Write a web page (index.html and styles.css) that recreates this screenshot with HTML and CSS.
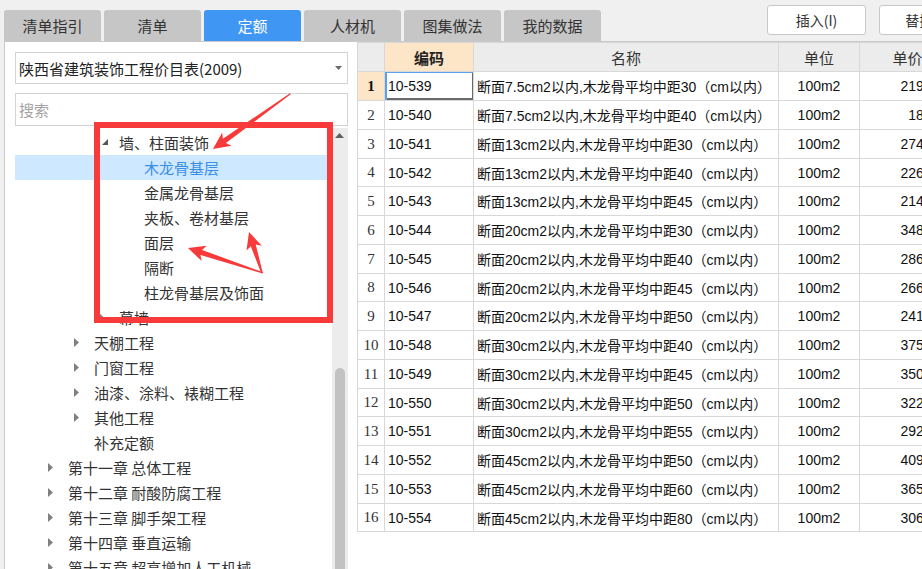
FILE: index.html
```html
<!DOCTYPE html>
<html lang="zh-CN">
<head>
<meta charset="utf-8">
<title>定额</title>
<link rel="stylesheet" href="styles.css">
</head>
<body>
<div class="topbar">
  <div class="tabs">
    <div class="tab">清单指引</div>
    <div class="tab">清单</div>
    <div class="tab active">定额</div>
    <div class="tab">人材机</div>
    <div class="tab">图集做法</div>
    <div class="tab">我的数据</div>
  </div>
  <div class="actions">
    <div class="btn">插入(I)</div>
    <div class="btn">替换(R)</div>
  </div>
</div>
<div class="main">
  <div class="left">
    <div class="select">
      <span>陕西省建筑装饰工程价目表(2009)</span>
      <svg class="dd" width="7" height="4" viewBox="0 0 7 4"><polygon points="0,0 7,0 3.5,4" fill="#6a6a6a"/></svg>
    </div>
    <div class="search">搜索</div>
    <div class="treewrap">
      <div class="tree">
        <div class="row l3"><span class="tw"><svg class="exp" width="6" height="6" viewBox="0 0 6 6"><polygon points="6,0 6,6 0,6" fill="#555"/></svg></span>墙、柱面装饰</div>
        <div class="row l4 sel"><span class="tw"></span>木龙骨基层</div>
        <div class="row l4"><span class="tw"></span>金属龙骨基层</div>
        <div class="row l4"><span class="tw"></span>夹板、卷材基层</div>
        <div class="row l4"><span class="tw"></span>面层</div>
        <div class="row l4"><span class="tw"></span>隔断</div>
        <div class="row l4"><span class="tw"></span>柱龙骨基层及饰面</div>
        <div class="row l3"><span class="tw"><svg width="5" height="9" viewBox="0 0 5 9"><polygon points="0,0 5,4.5 0,9" fill="#808080"/></svg></span>幕墙</div>
        <div class="row l2"><span class="tw"><svg width="5" height="9" viewBox="0 0 5 9"><polygon points="0,0 5,4.5 0,9" fill="#808080"/></svg></span>天棚工程</div>
        <div class="row l2"><span class="tw"><svg width="5" height="9" viewBox="0 0 5 9"><polygon points="0,0 5,4.5 0,9" fill="#808080"/></svg></span>门窗工程</div>
        <div class="row l2"><span class="tw"><svg width="5" height="9" viewBox="0 0 5 9"><polygon points="0,0 5,4.5 0,9" fill="#808080"/></svg></span>油漆、涂料、裱糊工程</div>
        <div class="row l2"><span class="tw"><svg width="5" height="9" viewBox="0 0 5 9"><polygon points="0,0 5,4.5 0,9" fill="#808080"/></svg></span>其他工程</div>
        <div class="row l2"><span class="tw"></span>补充定额</div>
        <div class="row l1"><span class="tw"><svg width="5" height="9" viewBox="0 0 5 9"><polygon points="0,0 5,4.5 0,9" fill="#808080"/></svg></span>第十一章 总体工程</div>
        <div class="row l1"><span class="tw"><svg width="5" height="9" viewBox="0 0 5 9"><polygon points="0,0 5,4.5 0,9" fill="#808080"/></svg></span>第十二章 耐酸防腐工程</div>
        <div class="row l1"><span class="tw"><svg width="5" height="9" viewBox="0 0 5 9"><polygon points="0,0 5,4.5 0,9" fill="#808080"/></svg></span>第十三章 脚手架工程</div>
        <div class="row l1"><span class="tw"><svg width="5" height="9" viewBox="0 0 5 9"><polygon points="0,0 5,4.5 0,9" fill="#808080"/></svg></span>第十四章 垂直运输</div>
        <div class="row l1"><span class="tw"><svg width="5" height="9" viewBox="0 0 5 9"><polygon points="0,0 5,4.5 0,9" fill="#808080"/></svg></span>第十五章 超高增加人工机械</div>
      </div>
      <div class="scroll">
        <svg class="up" width="9" height="5" viewBox="0 0 9 5"><polygon points="0,5 4.5,0 9,5" fill="#606060"/></svg>
        <div class="thumb"></div>
      </div>
    </div>
  </div>
  <div class="grid">
    <table>
      <colgroup>
        <col class="c-no"><col class="c-code"><col class="c-name"><col class="c-unit"><col class="c-price">
      </colgroup>
      <thead>
        <tr><th></th><th class="h-code">编码</th><th>名称</th><th>单位</th><th>单价</th></tr>
      </thead>
      <tbody>
        <tr><td class="no cur">1</td><td class="code focus">10-539</td><td class="name">断面7.5cm2以内,木龙骨平均中距30（cm以内）</td><td class="unit">100m2</td><td class="price">2193.64</td></tr>
        <tr><td class="no">2</td><td class="code">10-540</td><td class="name">断面7.5cm2以内,木龙骨平均中距40（cm以内）</td><td class="unit">100m2</td><td class="price">1864.7</td></tr>
        <tr><td class="no">3</td><td class="code">10-541</td><td class="name">断面13cm2以内,木龙骨平均中距30（cm以内）</td><td class="unit">100m2</td><td class="price">2745.18</td></tr>
        <tr><td class="no">4</td><td class="code">10-542</td><td class="name">断面13cm2以内,木龙骨平均中距40（cm以内）</td><td class="unit">100m2</td><td class="price">2269.35</td></tr>
        <tr><td class="no">5</td><td class="code">10-543</td><td class="name">断面13cm2以内,木龙骨平均中距45（cm以内）</td><td class="unit">100m2</td><td class="price">2142.86</td></tr>
        <tr><td class="no">6</td><td class="code">10-544</td><td class="name">断面20cm2以内,木龙骨平均中距30（cm以内）</td><td class="unit">100m2</td><td class="price">3481.27</td></tr>
        <tr><td class="no">7</td><td class="code">10-545</td><td class="name">断面20cm2以内,木龙骨平均中距40（cm以内）</td><td class="unit">100m2</td><td class="price">2866.04</td></tr>
        <tr><td class="no">8</td><td class="code">10-546</td><td class="name">断面20cm2以内,木龙骨平均中距45（cm以内）</td><td class="unit">100m2</td><td class="price">2660.93</td></tr>
        <tr><td class="no">9</td><td class="code">10-547</td><td class="name">断面20cm2以内,木龙骨平均中距50（cm以内）</td><td class="unit">100m2</td><td class="price">2417.52</td></tr>
        <tr><td class="no">10</td><td class="code">10-548</td><td class="name">断面30cm2以内,木龙骨平均中距40（cm以内）</td><td class="unit">100m2</td><td class="price">3752.41</td></tr>
        <tr><td class="no">11</td><td class="code">10-549</td><td class="name">断面30cm2以内,木龙骨平均中距45（cm以内）</td><td class="unit">100m2</td><td class="price">3508.66</td></tr>
        <tr><td class="no">12</td><td class="code">10-550</td><td class="name">断面30cm2以内,木龙骨平均中距50（cm以内）</td><td class="unit">100m2</td><td class="price">3224.15</td></tr>
        <tr><td class="no">13</td><td class="code">10-551</td><td class="name">断面30cm2以内,木龙骨平均中距55（cm以内）</td><td class="unit">100m2</td><td class="price">2923.08</td></tr>
        <tr><td class="no">14</td><td class="code">10-552</td><td class="name">断面45cm2以内,木龙骨平均中距50（cm以内）</td><td class="unit">100m2</td><td class="price">4093.72</td></tr>
        <tr><td class="no">15</td><td class="code">10-553</td><td class="name">断面45cm2以内,木龙骨平均中距60（cm以内）</td><td class="unit">100m2</td><td class="price">3657.29</td></tr>
        <tr><td class="no">16</td><td class="code">10-554</td><td class="name">断面45cm2以内,木龙骨平均中距80（cm以内）</td><td class="unit">100m2</td><td class="price">3068.45</td></tr>
      </tbody>
    </table>
  </div>
</div>
<svg class="annot" width="922" height="569" viewBox="0 0 922 569">
  <rect x="97" y="125" width="233" height="195" fill="none" stroke="#f83a3a" stroke-width="6"/>
  <g transform="translate(213,149) rotate(144.5)">
    <polygon points="0,0 -17,-8 -14,-2.6 -95,-0.6 -95,0.6 -14,2.6 -17,8" fill="#f83a3a"/>
  </g>
  <g transform="translate(188,248) rotate(-161.6)">
    <polygon points="0,0 -17,-8 -14,-2.6 -79,-0.6 -79,0.6 -14,2.6 -17,8" fill="#f83a3a"/>
  </g>
  <g transform="translate(249,232) rotate(-107.6)">
    <polygon points="0,0 -17,-8 -14,-2.6 -43,-0.8 -43,0.8 -14,2.6 -17,8" fill="#f83a3a"/>
  </g>
</svg>
</body>
</html>
```
FILE: styles.css
```css
html, body {
  margin: 0;
  padding: 0;
}
body {
  width: 922px;
  height: 569px;
  overflow: hidden;
  background: #f0f0f0;
  font-family: "Noto Sans CJK SC", "Liberation Sans", sans-serif;
  color: #333;
  position: relative;
}
.topbar {
  height: 41px;
  display: flex;
  align-items: flex-start;
  padding-left: 4px;
  box-sizing: border-box;
  overflow: hidden;
}
.tabs {
  display: flex;
  gap: 3px;
  margin-top: 10px;
  flex-shrink: 0;
}
.tab {
  width: 97px;
  height: 31px;
  background: #c6c6c6;
  border-radius: 3px 3px 0 0;
  font-size: 15px;
  color: #333;
  display: flex;
  align-items: center;
  justify-content: center;
}
.tab.active {
  background: #3f97f3;
  color: #fff;
}
.actions {
  display: flex;
  gap: 13px;
  margin-left: 166px;
  margin-top: 5px;
  flex-shrink: 0;
}
.btn {
  width: 99px;
  height: 30px;
  box-sizing: border-box;
  background: #fff;
  border: 1px solid #c8c8c8;
  border-radius: 3px;
  font-size: 14px;
  color: #333;
  display: flex;
  align-items: center;
  justify-content: center;
  flex-shrink: 0;
}
.main {
  display: flex;
  height: 528px;
}
.left {
  width: 353px;
  flex-shrink: 0;
  margin-left: 4px;
  box-sizing: border-box;
  background: #fff;
  border-left: 1px solid #c9c9c9;
  border-top: 1px solid #c9c9c9;
  padding: 10px 9px 0 10px;
  display: flex;
  flex-direction: column;
  overflow: hidden;
}
.select {
  height: 32px;
  box-sizing: border-box;
  border: 1px solid #d3d3d3;
  display: flex;
  align-items: center;
  padding-left: 3px;
  font-size: 15px;
  color: #222;
  flex-shrink: 0;
}
.select .dd {
  margin-left: auto;
  margin-right: 5px;
}
.search {
  margin-top: 9px;
  height: 33px;
  box-sizing: border-box;
  border: 1px solid #d3d3d3;
  padding-left: 3px;
  font-size: 15px;
  color: #a3a3a3;
  display: flex;
  align-items: center;
  flex-shrink: 0;
}
.treewrap {
  margin-top: 2px;
  display: flex;
  flex: 1;
  min-height: 0;
}
.tree {
  flex: 1;
  padding-top: 2px;
  overflow: hidden;
}
.row {
  height: 25px;
  display: flex;
  align-items: center;
  font-size: 15px;
  color: #333;
  white-space: nowrap;
}
.row.l1 { padding-left: 33px; }
.row.l2 { padding-left: 59px; }
.row.l3 { padding-left: 84px; }
.row.l4 { padding-left: 109px; }
.row.sel {
  background: #cde8ff;
  color: #3a8de4;
}
.tw {
  width: 20px;
  flex-shrink: 0;
  display: flex;
  align-items: center;
}
.tw .exp {
  margin-left: 3px;
  margin-top: -2px;
}
.scroll {
  width: 16px;
  background: #ececec;
  display: flex;
  flex-direction: column;
  flex-shrink: 0;
}
.scroll .up {
  margin: 5px 0 0 3px;
  flex-shrink: 0;
}
.thumb {
  margin: 230px 0 0 3px;
  width: 10px;
  flex: 1;
  background: #c2c2c2;
  border-radius: 5px 5px 0 0;
}
.grid {
  flex: 1;
  background: #fff;
  border-top: 1px solid #c9c9c9;
  overflow: hidden;
  min-width: 0;
}
table {
  border-collapse: collapse;
  table-layout: fixed;
  width: 598px;
  font-family: "Liberation Sans", "Noto Sans CJK SC", sans-serif;
  font-size: 14px;
  color: #111;
}
.c-no { width: 27px; }
.c-code { width: 89px; }
.c-name { width: 305px; }
.c-unit { width: 81px; }
.c-price { width: 96px; }
th, td {
  border: 1px solid #d8d8d8;
  white-space: nowrap;
  overflow: hidden;
  padding: 0 3px;
}
th {
  height: 28px;
  background: #ececec;
  font-weight: normal;
  font-size: 15px;
  font-family: "Noto Sans CJK SC", sans-serif;
  color: #333;
  text-align: center;
}
th.h-code {
  background: #fde5c8;
  font-weight: bold;
  color: #222;
}
tbody tr { height: 29px; }
tbody tr:nth-child(4n) { height: 28px; }
td.no {
  text-align: center;
  padding: 0;
  font-family: "Liberation Serif", serif;
  font-size: 15px;
  color: #333;
}
td.no.cur {
  background: #fde5c8;
  font-weight: bold;
  color: #111;
}
td.focus {
  box-shadow: inset 2px 1px 0 #5aa2ee, inset -1px -2px 0 #6a6a6a;
}
td.unit { text-align: center; }
td.price {
  text-align: right;
  padding-right: 4px;
}
.annot {
  position: absolute;
  top: 0;
  left: 0;
  pointer-events: none;
}
```
